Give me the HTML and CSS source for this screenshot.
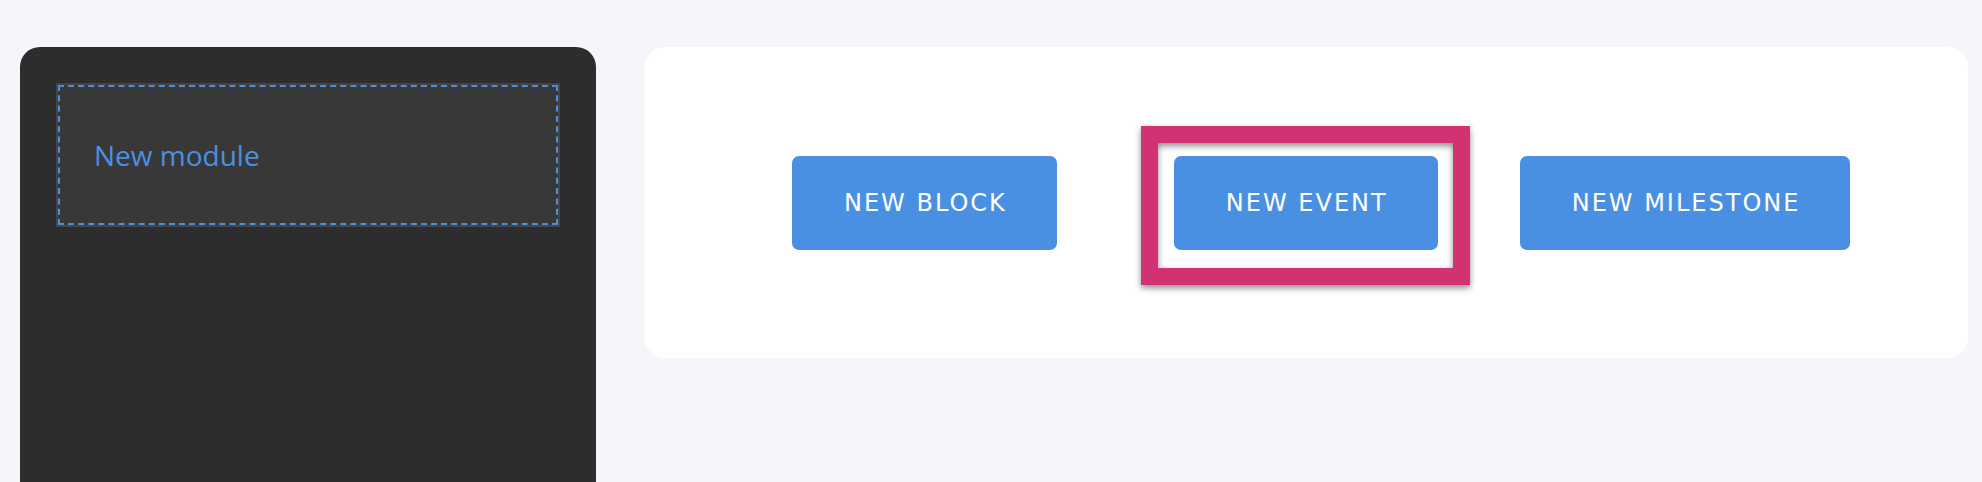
FILE: index.html
```html
<!DOCTYPE html>
<html>
<head>
    <title>Timeline Builder</title>
    <link rel="stylesheet" href="styles.css">
</head>
<body>
    <div class="page">
        <aside class="sidebar">
            <div class="module-slot">
                <span class="module-label">New module</span>
            </div>
        </aside>

        <section class="toolbar">
            <button class="btn btn-block">NEW BLOCK</button>
            <div class="spotlight">
                <button class="btn">NEW EVENT</button>
                <div class="spotlight-frame"></div>
            </div>
            <button class="btn">NEW MILESTONE</button>
        </section>
    </div>
</body>
</html>
```

FILE: styles.css
```css
body {
    margin: 0;
    background: #f5f6fa;
    font-family: "Open Sans", "Noto Sans", sans-serif;
    overflow: hidden;
}
.page {
    display: flex;
    align-items: flex-start;
    gap: 49px;
    padding: 47px 14px 0 20px;
}
.sidebar {
    width: 576px;
    height: 600px;
    flex-shrink: 0;
    box-sizing: border-box;
    padding: 38px;
    background: #2d2d2d;
    border-radius: 20px;
}
.module-slot {
    height: 140px;
    box-sizing: border-box;
    display: flex;
    align-items: center;
    padding-left: 34px;
    background: #383838;
    border: 2px dashed #4a90e2;
    box-shadow: 0 0 0 2px #454545;
}
.module-label {
    color: #4a90e2;
    font-size: 28px;
}
.toolbar {
    flex: 1;
    height: 311px;
    display: flex;
    align-items: center;
    padding-left: 147px;
    background: #ffffff;
    border-radius: 20px;
}
.btn {
    height: 94px;
    padding: 0 50px 0 52px;
    border: none;
    border-radius: 7px;
    background: #4a90e2;
    color: #ffffff;
    font-family: "DejaVu Sans", Verdana, sans-serif;
    font-size: 24px;
    letter-spacing: 2px;
    cursor: pointer;
}
.spotlight {
    position: relative;
    margin: 0 82px 0 117px;
}
.spotlight .btn {
    display: block;
}
.spotlight-frame {
    position: absolute;
    top: -30px;
    left: -33px;
    right: -32px;
    bottom: -35px;
    border: 17px solid #d23273;
    filter: drop-shadow(0 3px 3px rgba(0,0,0,0.45));
    pointer-events: none;
}
```
